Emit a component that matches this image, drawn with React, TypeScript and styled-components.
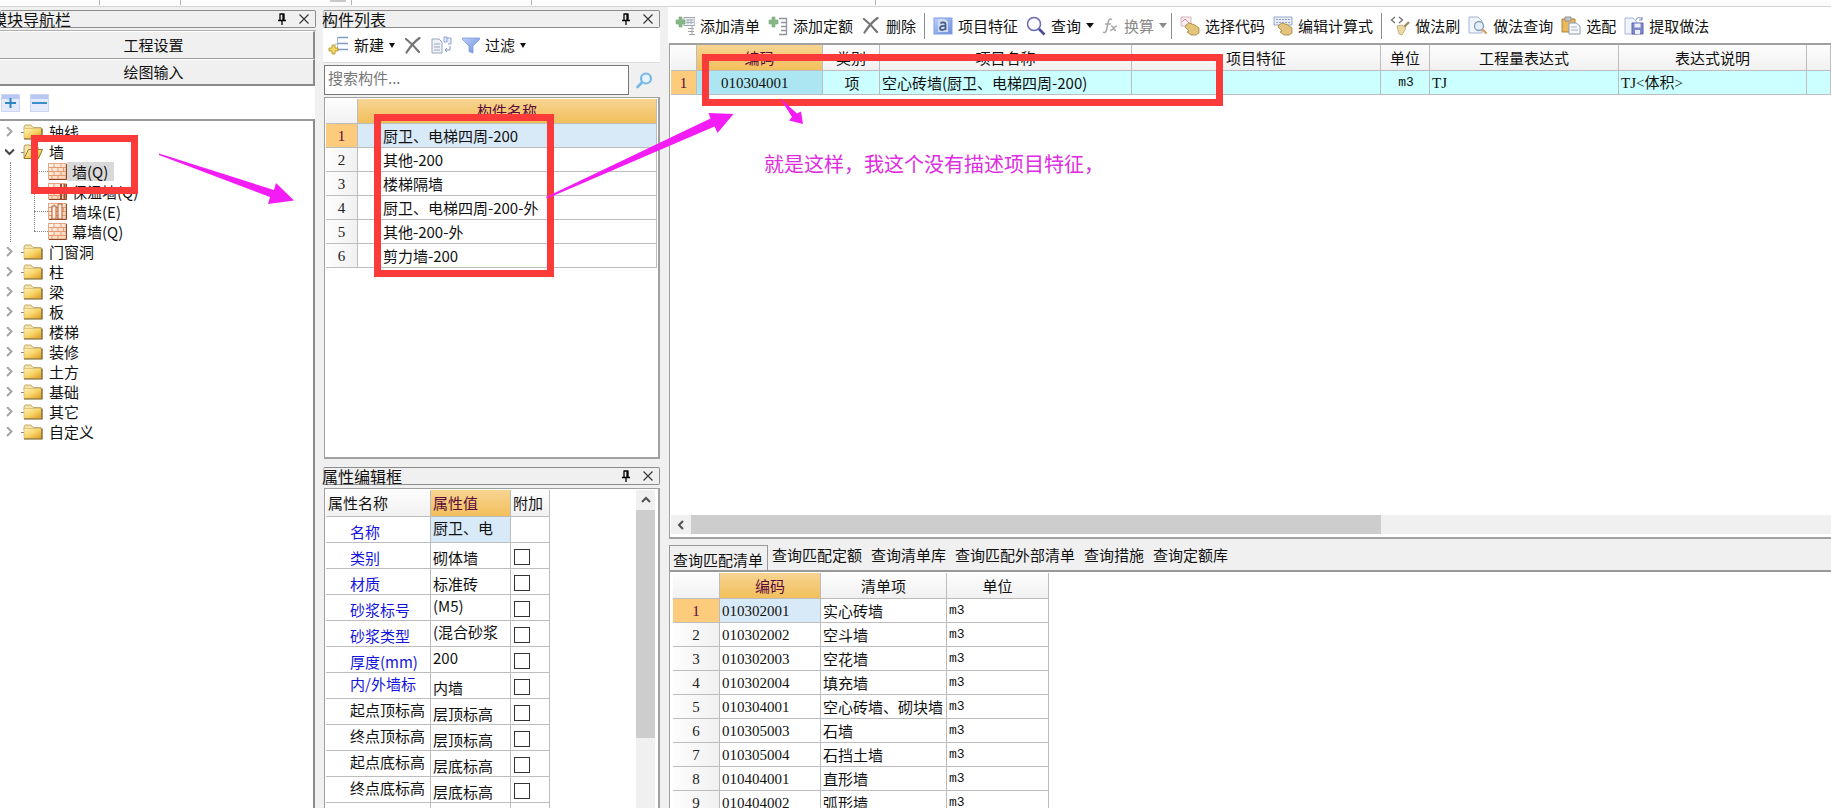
import React from 'react';
import styled, { createGlobalStyle } from 'styled-components';

const sans = `"Noto Sans CJK SC", "Liberation Sans", sans-serif`;
const digits = `"Liberation Serif", "Noto Sans CJK SC", serif`;
const mono = `"Liberation Mono", monospace`;

const Global = createGlobalStyle`
  * { box-sizing: border-box; }
  body { margin: 0; background: #f0f0f0; color: #111; font: 15px/20px ${sans}; }
  button, input { font: inherit; color: inherit; }
  button { border: 0; padding: 0; background: none; }
  svg { display: block; flex: none; }
`;

/* ---------- shell ---------- */
const Page = styled.div`
  position: relative;
  display: flex;
  flex-direction: column;
  height: 100vh;
  overflow: hidden;
`;
const Ribbon = styled.div`
  flex: none;
  display: flex;
  height: 7px;
  background: #fcfcfc;
  border-bottom: 1px solid #d4d4d4;
`;
const RibbonPart = styled.div<{ $w: number; $line?: boolean; $fill?: boolean }>`
  width: ${p => p.$w}px;
  height: ${p => (p.$fill ? 2 : 5)}px;
  background: ${p => (p.$fill ? '#c8c8c8' : 'transparent')};
  border-right: ${p => (p.$line ? '1px solid #b4b4b4' : '0')};
`;
const Columns = styled.div`
  flex: 1;
  min-height: 0;
  display: flex;
  gap: 7px;
`;
const NavColumn = styled.aside`
  flex: none;
  width: 316px;
  padding-top: 3px;
  display: flex;
  flex-direction: column;
`;
const ListColumn = styled.section`
  flex: none;
  width: 337px;
  padding-top: 3px;
  display: flex;
  flex-direction: column;
`;
const MainColumn = styled.main`
  flex: 1;
  min-width: 0;
  display: flex;
  flex-direction: column;
`;

const TitleBar = styled.header<{ $cut?: boolean }>`
  flex: none;
  display: flex;
  align-items: center;
  height: 18px;
  border: 1px solid #8c8c8c;
  border-left-color: #c4c4c4;
  border-radius: 2px;
  font-size: 16px;
  line-height: 16px;
  h2 {
    flex: 1;
    margin: 0 0 0 ${p => (p.$cut ? -10 : -2)}px;
    font: inherit;
    white-space: nowrap;
  }
`;
const TitleButton = styled.button`
  display: grid;
  place-items: center;
  width: 22px;
  height: 16px;
`;

/* ---------- navigation ---------- */
const NavSwitch = styled.div`
  flex: none;
  margin-top: 2px;
  padding-right: 1px;
  border-top: 1px solid #b0b0b0;
`;
const NavButton = styled.button`
  display: block;
  width: 100%;
  height: 28px;
  padding: 0 6px 1px 0;
  border-top: 1px solid #fff;
  border-right: 2px solid #8a8a8a;
  border-bottom: 1px solid #9a9a9a;
  &:last-child { border-bottom: 2px solid #8a8a8a; height: 27px; }
`;
const NavTools = styled.div`
  flex: none;
  display: flex;
  align-items: center;
  gap: 10px;
  height: 33px;
  padding-left: 1px;
  margin-right: 1px;
  background: #fff;
`;
const SquareButton = styled.button`
  display: grid;
  place-items: center;
  width: 19px;
  height: 18px;
  background: linear-gradient(#b9c8f2 0 4px, #e4eafb 4px);
  border: 1px solid #ccd6f4;
`;
const Tree = styled.ul`
  flex: 1;
  margin: 0 1px 0 0;
  padding: 1px 0 0;
  list-style: none;
  background: #fff;
  border-top: 2px solid #9a9a9a;
  border-right: 2px solid #8c8c8c;
`;
const SubTree = styled.ul`
  margin: 0 0 0 10px;
  padding: 0;
  list-style: none;
  border-left: 1px dotted #888;
`;
const Branch = styled.button`
  display: flex;
  align-items: center;
  width: 100%;
  height: 20px;
  padding-left: 5px;
  text-align: left;
`;
const Chevron = styled.svg`
  margin-right: 6px;
`;
const Dots = styled.span<{ $w: number }>`
  width: ${p => p.$w}px;
  border-top: 1px dotted #888;
`;
const BranchText = styled.span`
  padding-left: 6px;
`;
const Leaf = styled.li<{ $last?: boolean }>`
  margin-left: 23px;
  background: repeating-linear-gradient(#888 0 1px, #fff 1px 2px) left top / 1px ${p => (p.$last ? '10px' : '100%')} no-repeat;
`;
const LeafButton = styled.button`
  display: flex;
  align-items: center;
  height: 20px;
  padding-bottom: 2px;
`;
const LeafText = styled.span<{ $on?: boolean }>`
  padding: 0 6px 0 5px;
  line-height: 19px;
  background: ${p => (p.$on ? '#d9d9d9' : 'transparent')};
`;

/* ---------- component list ---------- */
const ListTools = styled.div`
  flex: none;
  display: flex;
  align-items: center;
  gap: 10px;
  height: 35px;
  padding: 0 0 0 5px;
  background: #fff;
  border-bottom: 1px solid #dcdcdc;
`;
const ToolButton = styled.button<{ $off?: boolean }>`
  flex: none;
  display: flex;
  align-items: center;
  gap: 5px;
  height: 24px;
  white-space: nowrap;
  color: ${p => (p.$off ? '#8a8a8a' : '#111')};
`;
const Caret = styled.span<{ $small?: boolean }>`
  border: ${p => (p.$small ? 3 : 4)}px solid transparent;
  border-top: 5px solid currentColor;
  border-bottom: 0;
`;
const SearchRow = styled.div`
  flex: none;
  display: flex;
  align-items: center;
  margin: 2px 0 2px 1px;
  height: 30px;
`;
const SearchInput = styled.input`
  flex: 1;
  min-width: 0;
  height: 30px;
  padding: 0 3px 5px;
  border: 1px solid #777;
  background: #fff;
  outline: 0;
  &::placeholder { color: #777; opacity: 1; }
`;
const SearchButton = styled.button`
  display: grid;
  place-items: center;
  width: 31px;
  height: 30px;
`;
const Sheet = styled.div`
  flex: 1 1 0;
  min-height: 0;
  display: flex;
  align-items: flex-start;
  margin-left: 1px;
  background: #fff;
  border: 1px solid #a0a0a0;
  border-right-width: 2px;
  border-bottom-width: 2px;
  overflow: hidden;
`;
const ListSheet = styled(Sheet)`
  flex: 0 0 362px;
  margin-bottom: 8px;
  padding: 1px 1px 0;
`;
const PropSheet = styled(Sheet)`
  margin-top: 3px;
  padding: 1px 3px 0 1px;
  border-bottom: 0;
  justify-content: space-between;
`;

/* ---------- tables ---------- */
const Table = styled.table<{ $w?: number; $row?: number; $head?: number }>`
  flex: none;
  width: ${p => (p.$w ? p.$w + 'px' : '100%')};
  table-layout: fixed;
  border-collapse: separate;
  border-spacing: 0;
  th, td {
    height: ${p => p.$row ?? 24}px;
    padding: 0;
    border-right: 1px solid #bdbdbd;
    border-bottom: 1px solid #bdbdbd;
    font-weight: 400;
    line-height: 20px;
    white-space: nowrap;
    overflow: hidden;
    text-align: left;
  }
  thead th {
    height: ${p => p.$head ?? 25}px;
    text-align: center;
    background: linear-gradient(#fdfdfd, #f1f1f1);
  }
`;
const HotHead = styled.th<{ $left?: boolean }>`
  && {
    background: linear-gradient(#f7d492, #f2bf5c);
    color: #5c0a3c;
    text-align: ${p => (p.$left ? 'left' : 'center')};
    padding-left: ${p => (p.$left ? 2 : 0)}px;
  }
`;
const RowNo = styled.th<{ $on?: boolean }>`
  && {
    text-align: center;
    font-family: ${digits};
    color: ${p => (p.$on ? '#5c0a3c' : '#222')};
    background: ${p => (p.$on ? '#fdcb7c' : 'linear-gradient(90deg, #fdfdfd, #f1f1f1)')};
  }
`;
const Cell = styled.td<{ $pad?: number; $bg?: string; $center?: boolean }>`
  && {
    padding-left: ${p => p.$pad ?? 2}px;
    background: ${p => p.$bg ?? 'transparent'};
    text-align: ${p => (p.$center ? 'center' : 'left')};
  }
`;
const CodeCell = styled(Cell)`
  && { font-family: ${digits}; }
`;
const UnitCell = styled(Cell)`
  && { font-family: ${mono}; font-size: 13px; }
`;
const LeftHead = styled.th`
  && { text-align: left; padding-left: 2px; }
`;
const PropCell = styled(Cell)<{ $blue?: boolean; $high?: boolean }>`
  && {
    color: ${p => (p.$blue ? '#1414dc' : '#111')};
    padding-top: ${p => (p.$high ? 0 : 4)}px;
    padding-bottom: ${p => (p.$high ? 3 : 0)}px;
    line-height: 20px;
  }
`;
const Check = styled.input`
  appearance: none;
  display: block;
  width: 16px;
  height: 16px;
  margin: 2px 0 0;
  border: 1px solid #333;
  background: #fff;
`;
const VScroll = styled.div`
  width: 19px;
  height: 100%;
  background: #f0f0f0;
  display: flex;
  flex-direction: column;
`;
const ScrollArrow = styled.button`
  display: grid;
  place-items: center;
  flex: none;
  width: 20px;
  height: 20px;
`;
const VThumb = styled.div`
  height: 228px;
  background: #cdcdcd;
`;

/* ---------- main area ---------- */
const MainTools = styled.div`
  flex: none;
  display: flex;
  align-items: center;
  gap: 8px;
  height: 36px;
  padding: 1px 0 0 7px;
  background: #fff;
  margin-left: 1px;
`;
const Sep = styled.span<{ $tight?: boolean }>`
  width: 1px;
  height: 26px;
  margin-left: ${p => (p.$tight ? -4 : 0)}px;
  background: #8c8c8c;
`;
const GridPane = styled.div`
  flex: none;
  display: flex;
  flex-direction: column;
  height: 496px;
  margin-left: 2px;
  padding: 0 0 0 1px;
  background: #fff;
  border: solid #a0a0a0;
  border-width: 2px 0 2px 1px;
`;
const GridBody = styled.div`
  flex: 1;
  overflow: hidden;
`;
const HScroll = styled.div`
  flex: none;
  display: flex;
  height: 19px;
  margin-bottom: 3px;
  background: #f0f0f0;
`;
const HThumb = styled.div`
  width: 59.5%;
  background: #cdcdcd;
`;
const Tabs = styled.div`
  flex: none;
  display: flex;
  align-items: flex-start;
  height: 31px;
  margin-left: 2px;
  padding-top: 6px;
`;
const Tab = styled.button<{ $on?: boolean }>`
  flex: none;
  height: ${p => (p.$on ? 25 : 20)}px;
  padding: ${p => (p.$on ? '3px 4px 0 3px' : '0 5px 0 4px')};
  border: solid #999;
  border-width: ${p => (p.$on ? '1px 1px 0 1px' : '0')};
`;
const ResultPane = styled.div`
  flex: 1;
  min-height: 0;
  margin-left: 2px;
  padding: 1px 0 0 3px;
  overflow: hidden;
  background: #fff;
  border-top: 2px solid #999;
  border-left: 1px solid #a0a0a0;
`;

/* ---------- mark-up drawn over the window ---------- */
const Marks = styled.svg`
  position: absolute;
  inset: 0;
  width: 100%;
  height: 100%;
  pointer-events: none;
`;
const Note = styled.p`
  position: absolute;
  left: 764px;
  top: 150px;
  margin: 0;
  font-size: 20px;
  line-height: 28px;
  color: #e02ce0;
  white-space: nowrap;
`;

/* ---------- icons ---------- */
const Pin = () => (
  <svg width="10" height="12" viewBox="0 0 10 12"><path d="M2.5 1h5M3 1v6M7 1v6M6 1v6M1 7.5h8M5 8v4" stroke="#000" strokeWidth="1.3" fill="none" /></svg>
);
const Close = () => (
  <svg width="10" height="10" viewBox="0 0 10 10"><path d="M.5.5l9 9M9.500.5l-9 9" stroke="#333" strokeWidth="1.1" /></svg>
);
const Folder = () => (
  <svg width="20" height="16" viewBox="0 0 20 16">
    <path d="M1 3l1-2h6l2 2.500h8V6H1z" fill="#f3e3ae" stroke="#b89a50" strokeWidth=".8" />
    <path d="M1 4.500h17.500v10H1z" fill="url(#gold)" stroke="#d0b060" strokeWidth=".6" />
    <path d="M1 15h18V4.500" fill="none" stroke="#6e5418" strokeWidth="1.2" />
  </svg>
);
const OpenFolder = () => (
  <svg width="20" height="16" viewBox="0 0 20 16">
    <path d="M1 14V3l1-2h5l2 2h6v3" fill="#f3e3ae" stroke="#b89a50" />
    <path d="M1 14.500L5.500 5.500H19.500L15.500 14.500z" fill="url(#gold)" stroke="#9a7826" />
  </svg>
);
const Brick = ({ kind = 'plain' }: { kind?: 'plain' | 'warm' | 'stack' }) => (
  <svg width="19" height="17" viewBox="0 0 19 17">
    <rect x=".5" y=".5" width="17.500" height="15.500" fill="url(#clay)" stroke="#e4a684" />
    <path d="M1 4.500h17M1 8.500h17M1 12.500h17M6 1v3.500M13 1v3.500M4 4.500v4M10 4.500v4M15.500 4.500v4M6 8.500v4M13 8.500v4M4 12.500V16M10 12.500V16" stroke="#e39a74" fill="none" />
    <path d="M1 16.500h17.500V1" stroke="#8c4a2c" fill="none" />
    {kind === 'warm' && <path d="M12 1h2v15h-2zM15.500 1h2v15h-2z" fill="#a84c30" />}
    {kind === 'stack' && <path d="M4 3h4v13H4zM10 1h4v15h-4z" fill="#fff2e4" stroke="#b8562e" />}
  </svg>
);
const NewIcon = () => (
  <svg width="21" height="20" viewBox="0 0 21 20">
    <path d="M10 2.500h10M10 8.500h10M10 14.500h10" stroke="#7f9cc4" strokeWidth="1.600" />
    <path d="M9.500 2v14M7 9h3" stroke="#a8b8cc" />
    <path d="M4 10h3v3h3v3H7v3H4v-3H1v-3h3z" fill="#f5d860" stroke="#b8962c" strokeWidth=".9" />
  </svg>
);
const Cross = ({ w = 16 }: { w?: number }) => (
  <svg width={w} height="17" viewBox="0 0 16 17"><path d="M1 2c5 4 9 8 13 13M14.500 1C9 5 5 10 1.500 15.500" fill="none" stroke="#757575" strokeWidth="2.200" strokeLinecap="round" /></svg>
);
const CopyIcon = () => (
  <svg width="21" height="18" viewBox="0 0 21 18">
    <path d="M1 3h7l3 3v11H1z" fill="#eef1f8" stroke="#9aa6bc" /><path d="M3 8h6M3 11h6M3 14h6" stroke="#9aa6bc" />
    <path d="M13 1h3v5h-3zM15 2h5v6h-3" fill="#e6ecfa" stroke="#93a5d6" /><path d="M19 10v4h-5m2-2l-2 2 2 2" fill="none" stroke="#7e93cc" />
  </svg>
);
const Funnel = () => (
  <svg width="18" height="17" viewBox="0 0 18 17"><path d="M.5 1h17v1.500L11 9v7l-4-1.500V9L.5 2.500z" fill="url(#blue)" stroke="#7c9ade" strokeWidth=".8" /></svg>
);
const Lens = () => (
  <svg width="17" height="17" viewBox="0 0 17 17"><circle cx="10" cy="6.500" r="5" fill="#e4f3fd" stroke="#7ab8e6" strokeWidth="2.200" /><path d="M6 10.500L1.500 15" stroke="#7ab8e6" strokeWidth="2.600" strokeLinecap="round" /></svg>
);
const AddList = () => (
  <svg width="20" height="20" viewBox="0 0 20 20">
    <path d="M9 1.500h11v8H9z" fill="#eef0f4" stroke="#a0a6b2" /><path d="M11 4h8M11 6.500h8M13 3v5M16 3v5" stroke="#a8aebc" />
    <path d="M17 10v9M13 12.500h6M13 15.500h6M14 18.500h6" stroke="#a4a4a4" />
    <path d="M4 1h3v3h3v4H7v3H4V8H1V4h3z" fill="#86b886" stroke="#78a878" strokeWidth=".6" />
  </svg>
);
const AddQuota = () => (
  <svg width="20" height="20" viewBox="0 0 20 20">
    <path d="M11 2.500h8M13 6.500h6M13 10.500h6M13 14.500h6M11 18.500h8M18.500 2v17" stroke="#8f949c" strokeWidth="1.300" fill="none" />
    <path d="M4 1h3v3h3v4H7v3H4V8H1V4h3z" fill="#86b886" stroke="#78a878" strokeWidth=".6" />
  </svg>
);
const Feature = () => (
  <svg width="20" height="18" viewBox="0 0 20 18">
    <rect x="1" y="1" width="18" height="16" fill="url(#blue)" stroke="#7f9ce6" />
    <path d="M5 2h7l3 3v10H5z" fill="#cfd9f0" />
    <path d="M7.500 6.500c1.500-1.600 5-1.300 5 .8V13M12.500 9c-3-.5-5.500.2-5.500 2.200s3.500 2.600 5.500.3" fill="none" stroke="#4a5c8c" strokeWidth="1.800" />
  </svg>
);
const Magnifier = () => (
  <svg width="20" height="20" viewBox="0 0 20 20"><circle cx="8" cy="8" r="6.500" fill="#fafaff" stroke="#6c6cb4" strokeWidth="1.500" /><path d="M13 13l5.500 5.500" stroke="#4a4a98" strokeWidth="2.600" /></svg>
);
const Fx = () => (
  <svg width="17" height="18" viewBox="0 0 17 18"><path d="M10 2.500C7.500 1 6.500 3 6 6L4.500 13c-.5 2.500-2 3-3.500 2M3 7h6M9 9c3-1 2 5 5 4.500M15 9c-3 0-4 5-7 4.500" fill="none" stroke="#a8a8a8" strokeWidth="1.500" /></svg>
);
const Hand = () => <path d="M6 9l3-2 6 2 4 3v5l-3 2h-5l-4-3 2-1-4-4z" fill="#e2c47c" stroke="#a8843c" strokeWidth=".8" />;
const PickCode = () => (
  <svg width="20" height="20" viewBox="0 0 20 20"><path d="M1 1h10v9H1z" fill="#f8eef0" stroke="#d0b4be" /><path d="M2 6l3-3 5 5" stroke="#d88a98" fill="none" /><Hand /></svg>
);
const EditFormula = () => (
  <svg width="20" height="20" viewBox="0 0 20 20"><path d="M1 1h18v8H1z" fill="#e8ecf6" stroke="#9aa8c8" /><path d="M3 3.500h14M3 6.500h14" stroke="#8fa0c6" strokeDasharray="2 1" /><Hand /></svg>
);
const Brush = () => (
  <svg width="20" height="20" viewBox="0 0 20 20"><path d="M5 1L1.500 4 5 7M9 1l3.500 3L9 7" fill="none" stroke="#707070" strokeWidth="1.300" /><path d="M19 6l-5 5" stroke="#a08c60" strokeWidth="2.400" /><path d="M7 10l5-1 4 3-4 7-3-1z" fill="#ead9a0" stroke="#b8a878" strokeWidth=".8" /></svg>
);
const PageLens = () => (
  <svg width="20" height="19" viewBox="0 0 20 19"><path d="M1 1h9l4 4v12H1z" fill="#f0f4fb" stroke="#a4b4d0" /><circle cx="11" cy="10" r="4.500" fill="#e2effb" stroke="#8a9ab4" strokeWidth="1.300" /><path d="M14.500 13.500l4 4" stroke="#dca060" strokeWidth="2.400" /></svg>
);
const Clipboard = () => (
  <svg width="20" height="19" viewBox="0 0 20 19"><path d="M1 3h13v13H1z" fill="#e9b95a" stroke="#b08434" /><path d="M4 1h6v4H4z" fill="#c8c8c8" stroke="#909090" /><path d="M8 7h7l4 3v8H8z" fill="#f6f8fc" stroke="#8c9ab4" /><path d="M10 11h6M10 14h7" stroke="#a4b0c8" /></svg>
);
const SavePage = () => (
  <svg width="20" height="19" viewBox="0 0 20 19"><path d="M1 2h8l4 4v12H1z" fill="#f0f4fc" stroke="#a4b4d8" /><path d="M8 7h11v11H8z" fill="#8088cc" stroke="#5c64ac" /><path d="M10.500 7.500h6v4h-6zM11 14h5v4h-5z" fill="#eef0fc" /><path d="M12 4c1-3 4-3 6-1m0-2v3h-3" fill="none" stroke="#7084b4" /></svg>
);

/* ---------- data ---------- */
const folders = ['门窗洞', '柱', '梁', '板', '楼梯', '装修', '土方', '基础', '其它', '自定义'];
const leaves: { name: string; kind: 'plain' | 'warm' | 'stack' }[] = [
  { name: '墙(Q)', kind: 'plain' },
  { name: '保温墙(Q)', kind: 'warm' },
  { name: '墙垛(E)', kind: 'stack' },
  { name: '幕墙(Q)', kind: 'plain' },
];
const parts = ['厨卫、电梯四周-200', '其他-200', '楼梯隔墙', '厨卫、电梯四周-200-外', '其他-200-外', '剪力墙-200'];
const props: { name: string; value: string; blue?: boolean; highName?: boolean; highValue?: boolean }[] = [
  { name: '名称', value: '厨卫、电', blue: true, highValue: true },
  { name: '类别', value: '砌体墙', blue: true },
  { name: '材质', value: '标准砖', blue: true },
  { name: '砂浆标号', value: '(M5)', blue: true, highValue: true },
  { name: '砂浆类型', value: '(混合砂浆', blue: true, highValue: true },
  { name: '厚度(mm)', value: '200', blue: true, highValue: true },
  { name: '内/外墙标', value: '内墙', blue: true, highName: true },
  { name: '起点顶标高', value: '层顶标高', highName: true },
  { name: '终点顶标高', value: '层顶标高', highName: true },
  { name: '起点底标高', value: '层底标高', highName: true },
  { name: '终点底标高', value: '层底标高', highName: true },
  { name: '', value: '' },
];
const tabs = ['查询匹配清单', '查询匹配定额', '查询清单库', '查询匹配外部清单', '查询措施', '查询定额库'];
const results = [
  ['010302001', '实心砖墙'],
  ['010302002', '空斗墙'],
  ['010302003', '空花墙'],
  ['010302004', '填充墙'],
  ['010304001', '空心砖墙、砌块墙'],
  ['010305003', '石墙'],
  ['010305004', '石挡土墙'],
  ['010404001', '直形墙'],
  ['010404002', '弧形墙'],
];

const PanelTitle = ({ text, cut }: { text: string; cut?: boolean }) => (
  <TitleBar $cut={cut}>
    <h2>{text}</h2>
    <TitleButton aria-label="固定"><Pin /></TitleButton>
    <TitleButton aria-label="关闭"><Close /></TitleButton>
  </TitleBar>
);

const TreeBranch = ({ name, open }: { name: string; open?: boolean }) => (
  <Branch>
    <Chevron width="10" height="10" viewBox="0 0 10 10">
      {open
        ? <path d="M0 2.500l4.500 4.500L9 2.500" fill="none" stroke="#444" strokeWidth="2" />
        : <path d="M2 0l4.500 4.500L2 9" fill="none" stroke="#a4a4a4" strokeWidth="2" />}
    </Chevron>
    <Dots $w={2} />
    {open ? <OpenFolder /> : <Folder />}
    <BranchText>{name}</BranchText>
  </Branch>
);

export default function App() {
  return (
    <Page>
      <Global />
      <Ribbon>
        <RibbonPart $w={100} $line />
        <RibbonPart $w={81} $line />
        <RibbonPart $w={149} />
        <RibbonPart $w={16} $fill />
        <RibbonPart $w={6} $line />
        <RibbonPart $w={180} $line />
        <RibbonPart $w={344} $line />
      </Ribbon>
      <Columns>
        <NavColumn>
          <PanelTitle text="模块导航栏" cut />
          <NavSwitch>
            <NavButton>工程设置</NavButton>
            <NavButton>绘图输入</NavButton>
          </NavSwitch>
          <NavTools>
            <SquareButton aria-label="展开">
              <svg width="11" height="11" viewBox="0 0 11 11"><path d="M0 6h11M5.500 1v10" stroke="#2f86c4" strokeWidth="2" /></svg>
            </SquareButton>
            <SquareButton aria-label="折叠">
              <svg width="15" height="11" viewBox="0 0 15 11"><path d="M0 6h15" stroke="#3f90c8" strokeWidth="2" /></svg>
            </SquareButton>
          </NavTools>
          <Tree>
            <li><TreeBranch name="轴线" /></li>
            <li>
              <TreeBranch name="墙" open />
              <SubTree>
                {leaves.map((l, i) => (
                  <Leaf key={l.name} $last={i === leaves.length - 1}>
                    <LeafButton>
                      <Dots $w={14} />
                      <Brick kind={l.kind} />
                      <LeafText $on={i === 0}>{l.name}</LeafText>
                    </LeafButton>
                  </Leaf>
                ))}
              </SubTree>
            </li>
            {folders.map(f => <li key={f}><TreeBranch name={f} /></li>)}
          </Tree>
        </NavColumn>

        <ListColumn>
          <PanelTitle text="构件列表" />
          <ListTools>
            <ToolButton><NewIcon />新建<Caret $small /></ToolButton>
            <ToolButton aria-label="删除构件"><Cross /></ToolButton>
            <ToolButton aria-label="复制构件"><CopyIcon /></ToolButton>
            <ToolButton><Funnel />过滤<Caret $small /></ToolButton>
          </ListTools>
          <SearchRow>
            <SearchInput aria-label="搜索构件" placeholder="搜索构件..." />
            <SearchButton aria-label="搜索"><Lens /></SearchButton>
          </SearchRow>
          <ListSheet>
            <Table>
              <colgroup><col style={{ width: 32 }} /><col /></colgroup>
              <thead><tr><th /><HotHead>构件名称</HotHead></tr></thead>
              <tbody>
                {parts.map((p, i) => (
                  <tr key={p}>
                    <RowNo $on={i === 0}>{i + 1}</RowNo>
                    <Cell $pad={25} $bg={i === 0 ? '#d8e9f8' : undefined}>{p}</Cell>
                  </tr>
                ))}
              </tbody>
            </Table>
          </ListSheet>
          <PanelTitle text="属性编辑框" />
          <PropSheet>
            <Table $w={224} $row={26} $head={27}>
              <colgroup><col style={{ width: 105 }} /><col style={{ width: 80 }} /><col style={{ width: 39 }} /></colgroup>
              <thead>
                <tr><LeftHead>属性名称</LeftHead><HotHead $left>属性值</HotHead><LeftHead>附加</LeftHead></tr>
              </thead>
              <tbody>
                {props.map((p, i) => (
                  <tr key={i}>
                    <PropCell $pad={24} $blue={p.blue} $high={p.highName}>{p.name}</PropCell>
                    <PropCell $high={p.highValue} $bg={i === 0 ? '#d8e9f8' : undefined}>{p.value}</PropCell>
                    <Cell $pad={3}>{i > 0 && <Check type="checkbox" aria-label={'附加 ' + p.name} />}</Cell>
                  </tr>
                ))}
              </tbody>
            </Table>
            <VScroll>
              <ScrollArrow aria-label="向上滚动">
                <svg width="10" height="8" viewBox="0 0 10 8"><path d="M1 6l4-4 4 4" fill="none" stroke="#505050" strokeWidth="2" /></svg>
              </ScrollArrow>
              <VThumb />
            </VScroll>
          </PropSheet>
        </ListColumn>

        <MainColumn>
          <MainTools>
            <ToolButton><AddList />添加清单</ToolButton>
            <ToolButton><AddQuota />添加定额</ToolButton>
            <ToolButton><Cross w={20} />删除</ToolButton>
            <Sep />
            <ToolButton><Feature />项目特征</ToolButton>
            <ToolButton><Magnifier />查询<Caret /></ToolButton>
            <ToolButton $off><Fx />换算<Caret /></ToolButton>
            <Sep $tight />
            <ToolButton><PickCode />选择代码</ToolButton>
            <ToolButton><EditFormula />编辑计算式</ToolButton>
            <Sep />
            <ToolButton><Brush />做法刷</ToolButton>
            <ToolButton><PageLens />做法查询</ToolButton>
            <ToolButton><Clipboard />选配</ToolButton>
            <ToolButton><SavePage />提取做法</ToolButton>
          </MainTools>
          <GridPane>
            <GridBody>
              <Table $head={26}>
                <colgroup>
                  {[26, 126, 57, 252, 249, 49, 189, 188].map((w, i) => <col key={i} style={{ width: w }} />)}
                  <col />
                </colgroup>
                <thead>
                  <tr>
                    <th /><HotHead>编码</HotHead><th>类别</th><th>项目名称</th><th>项目特征</th>
                    <th>单位</th><th>工程量表达式</th><th>表达式说明</th><th />
                  </tr>
                </thead>
                <tbody>
                  <tr>
                    <RowNo $on>1</RowNo>
                    <CodeCell $pad={24} $bg="#ade6f3">010304001</CodeCell>
                    <Cell $bg="#ccffff" $center>项</Cell>
                    <Cell $bg="#ccffff">空心砖墙(厨卫、电梯四周-200)</Cell>
                    <Cell $bg="#ccffff" />
                    <UnitCell $bg="#ccffff" $center>m3</UnitCell>
                    <CodeCell $bg="#ccffff">TJ</CodeCell>
                    <CodeCell $bg="#ccffff">TJ&lt;体积&gt;</CodeCell>
                    <Cell $bg="#ccffff" />
                  </tr>
                </tbody>
              </Table>
            </GridBody>
            <HScroll>
              <ScrollArrow aria-label="向左滚动">
                <svg width="8" height="10" viewBox="0 0 8 10"><path d="M6 1L2 5l4 4" fill="none" stroke="#505050" strokeWidth="2" /></svg>
              </ScrollArrow>
              <HThumb />
            </HScroll>
          </GridPane>
          <Tabs role="tablist">
            {tabs.map((t, i) => <Tab key={t} role="tab" aria-selected={i === 0} $on={i === 0}>{t}</Tab>)}
          </Tabs>
          <ResultPane>
            <Table $w={376} $head={26}>
              <colgroup><col style={{ width: 47 }} /><col style={{ width: 101 }} /><col style={{ width: 126 }} /><col style={{ width: 102 }} /></colgroup>
              <thead><tr><th /><HotHead>编码</HotHead><th>清单项</th><th>单位</th></tr></thead>
              <tbody>
                {results.map(([code, name], i) => (
                  <tr key={code}>
                    <RowNo $on={i === 0}>{i + 1}</RowNo>
                    <CodeCell $bg={i === 0 ? '#d8e9f8' : undefined}>{code}</CodeCell>
                    <Cell>{name}</Cell>
                    <UnitCell>m3</UnitCell>
                  </tr>
                ))}
              </tbody>
            </Table>
          </ResultPane>
        </MainColumn>
      </Columns>

      <Marks aria-hidden="true">
        <defs>
          <linearGradient id="gold" x1="0" y1="0" x2="1" y2="1"><stop offset="0" stopColor="#fdf3b8" /><stop offset=".5" stopColor="#f6d468" /><stop offset="1" stopColor="#dd9a1c" /></linearGradient>
          <linearGradient id="clay" x1="0" y1="0" x2="1" y2="1"><stop offset="0" stopColor="#fff8f0" /><stop offset="1" stopColor="#f8d0b0" /></linearGradient>
          <linearGradient id="blue" x1="0" y1="0" x2="1" y2="1"><stop offset="0" stopColor="#bcd0fa" /><stop offset="1" stopColor="#6d8edc" /></linearGradient>
        </defs>
        <g fill="none" stroke="#fb3a3a" strokeWidth="7">
          <rect x="34.500" y="138.500" width="100" height="52" />
          <rect x="377.500" y="117.500" width="173" height="156" />
          <rect x="705.500" y="57.500" width="514" height="45" />
        </g>
        <g fill="#f41cf4">
          <path d="M159 153.500L274 190L276 183L294 200.500L268 204L270 197L159 155Z" />
          <path d="M546 197L710.500 118.500L708.500 113L733.500 114L717.500 133L714.500 126.500L547 198.500Z" />
          <path d="M780 98L797 113.500L801 111.500L803 124L789 120.500L792 117Z" />
        </g>
      </Marks>
      <Note>就是这样，我这个没有描述项目特征，</Note>
    </Page>
  );
}
